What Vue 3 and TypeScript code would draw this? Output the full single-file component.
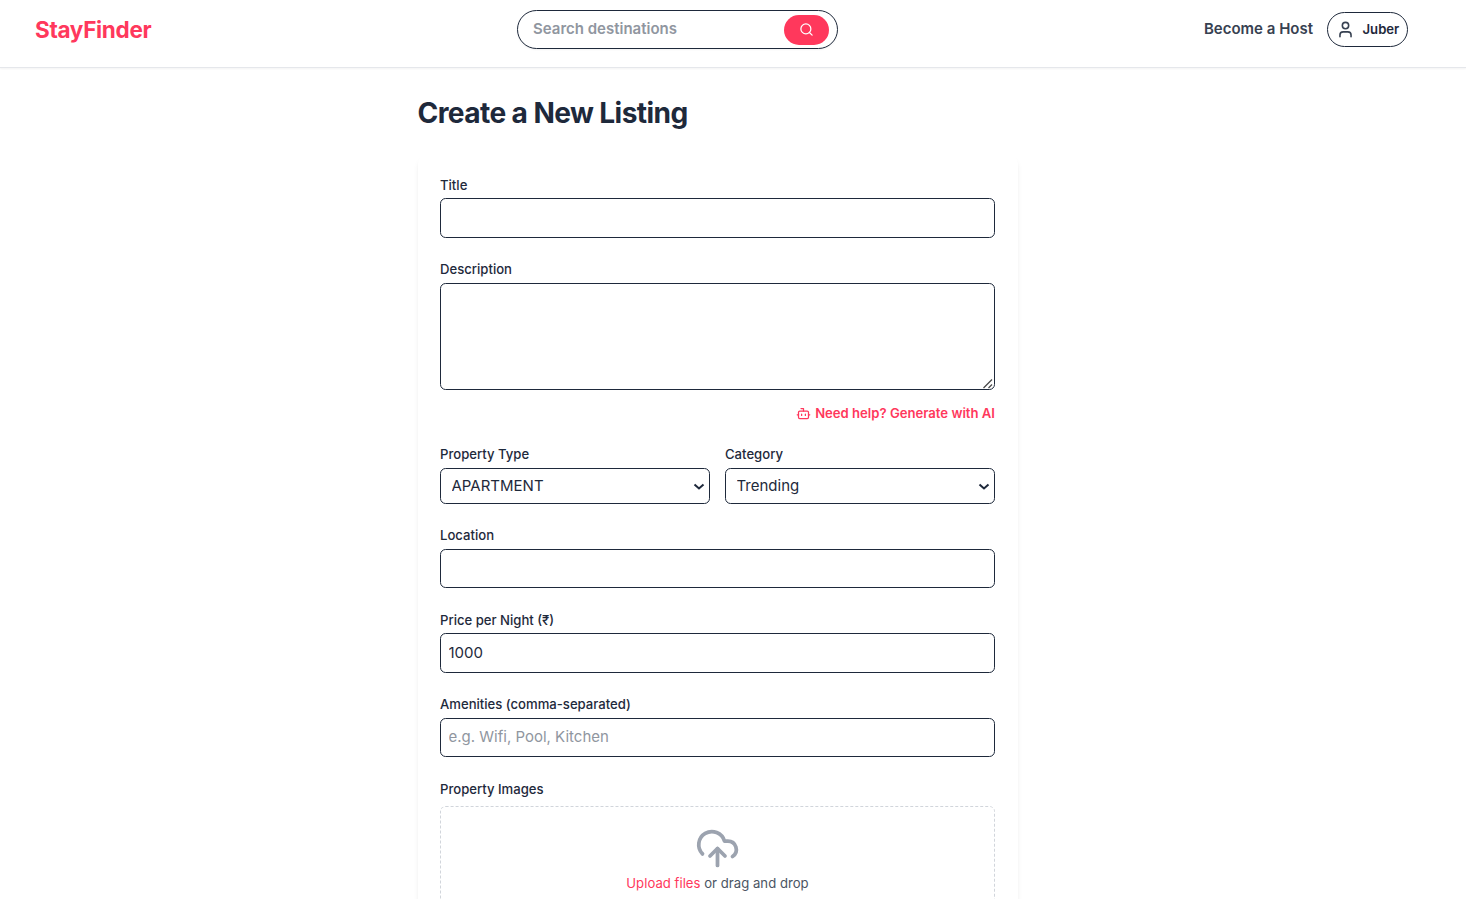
<script setup lang="ts">
import { ref } from 'vue'

const search = ref('')
const title = ref('')
const description = ref('')
const propertyType = ref('APARTMENT')
const category = ref('Trending')
const location = ref('')
const price = ref('1000')
const amenities = ref('')

const propertyTypes: string[] = ['APARTMENT', 'HOUSE', 'VILLA', 'CABIN']
const categories: string[] = ['Trending', 'Beach', 'Mountain', 'City']
</script>

<template>
  <div class="page">
    <header class="header">
      <a class="logo">StayFinder</a>
      <form class="search" @submit.prevent>
        <input v-model="search" class="search-input" type="text" placeholder="Search destinations" />
        <button class="search-button" type="submit" aria-label="Search">
          <svg width="15" height="15" viewBox="0 0 24 24" fill="none" stroke="currentColor" stroke-width="2" stroke-linecap="round" stroke-linejoin="round">
            <circle cx="11" cy="11" r="8" />
            <path d="m21 21-4.3-4.3" />
          </svg>
        </button>
      </form>
      <nav class="nav">
        <a class="host">Become a Host</a>
        <button class="user" type="button">
          <svg width="19" height="19" viewBox="0 0 24 24" fill="none" stroke="currentColor" stroke-width="2" stroke-linecap="round" stroke-linejoin="round">
            <path d="M19 21v-2a4 4 0 0 0-4-4H9a4 4 0 0 0-4 4v2" />
            <circle cx="12" cy="7" r="4" />
          </svg>
          <span>Juber</span>
        </button>
      </nav>
    </header>

    <main class="main">
      <h1 class="heading">Create a New Listing</h1>
      <form class="card" @submit.prevent>
        <div class="field title-field">
          <label for="title">Title</label>
          <input id="title" v-model="title" class="control tall" type="text" />
        </div>
        <div class="field description-field">
          <label for="description">Description</label>
          <div class="wrap">
            <textarea id="description" v-model="description" class="control area"></textarea>
            <svg class="grip" width="10" height="10" viewBox="0 0 10 10" fill="none" stroke="#4b4b4b" stroke-width="1.3">
              <path d="M0.5 9 9 0.5M5.5 9 9 5.5" />
            </svg>
          </div>
          <button class="ai" type="button">
            <svg width="15" height="15" viewBox="0 0 24 24" fill="none" stroke="currentColor" stroke-width="2" stroke-linecap="round" stroke-linejoin="round">
              <path d="M12 8V4H8" />
              <rect x="4" y="8" width="16" height="12" rx="2" />
              <path d="M2 14h2M20 14h2M15 13v2M9 13v2" />
            </svg>
            <span>Need help? Generate with AI</span>
          </button>
        </div>
        <div class="row">
          <div class="field">
            <label for="type">Property Type</label>
            <div class="wrap">
              <select id="type" v-model="propertyType" class="control select">
                <option v-for="item in propertyTypes" :key="item">{{ item }}</option>
              </select>
              <svg class="arrow" width="12" height="8" viewBox="0 0 12 8" fill="none" stroke="currentColor" stroke-width="2">
                <path d="m1.5 1.5 4.5 4 4.5-4" />
              </svg>
            </div>
          </div>
          <div class="field">
            <label for="category">Category</label>
            <div class="wrap">
              <select id="category" v-model="category" class="control select">
                <option v-for="item in categories" :key="item">{{ item }}</option>
              </select>
              <svg class="arrow" width="12" height="8" viewBox="0 0 12 8" fill="none" stroke="currentColor" stroke-width="2">
                <path d="m1.5 1.5 4.5 4 4.5-4" />
              </svg>
            </div>
          </div>
        </div>
        <div class="field location-field">
          <label for="location">Location</label>
          <input id="location" v-model="location" class="control" type="text" />
        </div>
        <div class="field price-field">
          <label for="price">Price per Night (₹)</label>
          <input id="price" v-model="price" class="control tall" type="text" />
        </div>
        <div class="field amenities-field">
          <label for="amenities">Amenities (comma-separated)</label>
          <input id="amenities" v-model="amenities" class="control" type="text" placeholder="e.g. Wifi, Pool, Kitchen" />
        </div>
        <div class="field">
          <label>Property Images</label>
          <div class="dropzone">
            <svg class="cloud" width="45" height="45" viewBox="0 0 24 24" fill="none" stroke="currentColor" stroke-width="2" stroke-linecap="round" stroke-linejoin="round">
              <path d="M4 14.899A7 7 0 1 1 15.71 8h1.79a4.5 4.5 0 0 1 2.5 8.242" />
              <path d="M12 12v9" />
              <path d="m16 16-4-4-4 4" />
            </svg>
            <p class="hint"><span class="upload">Upload files</span> or drag and drop</p>
          </div>
        </div>
      </form>
    </main>
  </div>
</template>

<style>
html,
body {
  background: #fff;
  overflow: hidden;
}
</style>

<style scoped>
.page,
.page * {
  box-sizing: border-box;
}
.page {
  height: 899px;
  overflow: hidden;
  font-family: Inter, "Liberation Sans", sans-serif;
  font-size: 15px;
  color: #1e293b;
}
button,
input,
select,
textarea {
  font: inherit;
  color: inherit;
  margin: 0;
}
button {
  padding: 0;
  border: 0;
  background: none;
}
.header {
  display: grid;
  grid-template-columns: 482px 321px 1fr;
  align-items: start;
  height: 68px;
  padding: 10px 58px 0 35px;
  background: #fff;
  border-bottom: 1px solid #e5e7eb;
  box-shadow: 0 1px 2px rgba(0, 0, 0, 0.05);
}
.logo {
  padding-top: 5px;
  font-size: 22.5px;
  line-height: 30px;
  font-weight: 700;
  letter-spacing: -0.3px;
  color: #ff385c;
}
.search {
  display: flex;
  align-items: center;
  height: 39px;
  padding: 0 8px 0 15px;
  border: 1px solid #1e293b;
  border-radius: 20px;
  background: #fff;
  box-shadow: 0 1px 2px rgba(0, 0, 0, 0.05);
}
.search-input {
  flex: 1;
  min-width: 0;
  padding: 0 0 2px;
  border: 0;
  outline: 0;
  background: transparent;
  font-weight: 600;
}
.search-input::placeholder,
.control::placeholder {
  color: #9096a0;
}
.search-button {
  display: flex;
  align-items: center;
  justify-content: center;
  width: 45px;
  height: 30px;
  margin-top: 1px;
  border-radius: 15px;
  background: #ff385c;
  color: #fff;
}
.search-button svg {
  margin-top: -1px;
}
.nav {
  display: flex;
  justify-content: flex-end;
  align-items: center;
  gap: 14px;
  padding-top: 2px;
}
.host {
  color: #374151;
  font-weight: 600;
  padding-bottom: 2px;
}
.user {
  display: flex;
  align-items: center;
  gap: 7.5px;
  width: 81px;
  height: 35px;
  padding-left: 8px;
  border: 1px solid #1e293b;
  border-radius: 18px;
  font-size: 13.125px;
  font-weight: 600;
}
.user span {
  padding-bottom: 1px;
}
.user svg {
  flex: none;
  color: #374151;
}
.main {
  width: 600px;
  margin-left: 417.5px;
  padding-top: 28px;
}
.heading {
  margin: 0;
  font-size: 28.125px;
  line-height: 34px;
  font-weight: 700;
  letter-spacing: -0.6px;
}
.card {
  margin-top: 26px;
  padding: 20px 22.5px;
  height: 1000px;
  background: #fff;
  border-radius: 8px;
  box-shadow: 0 4px 6px -1px rgba(0, 0, 0, 0.07), 0 2px 4px -2px rgba(0, 0, 0, 0.07);
}
.field {
  display: flex;
  flex-direction: column;
}
label {
  margin-bottom: 4px;
  font-size: 13.125px;
  line-height: 19px;
  font-weight: 500;
}
.control {
  display: block;
  width: 100%;
  height: 39px;
  padding: 0 7.5px 2px;
  border: 1px solid #1e293b;
  border-radius: 5.6px;
  outline: 0;
  background: #fff;
}
.tall {
  height: 40px;
}
.title-field {
  margin-bottom: 22px;
}
.title-field label {
  margin-bottom: 3px;
}
.wrap {
  position: relative;
}
.area {
  height: 107px;
  resize: none;
}
.grip {
  position: absolute;
  right: 2px;
  bottom: 1px;
}
.arrow {
  position: absolute;
  right: 5px;
  top: 15px;
  pointer-events: none;
}
.ai {
  display: flex;
  align-items: center;
  align-self: flex-end;
  gap: 4px;
  margin-top: 14px;
  font-size: 13.125px;
  line-height: 19px;
  font-weight: 600;
  color: #ff385c;
}
.row {
  display: grid;
  grid-template-columns: 1fr 1fr;
  gap: 15px;
  margin: 22px 0;
}
.select {
  height: 36px;
  padding: 0 24px 2px 10.5px;
  appearance: none;
}
.price-field {
  margin-top: 23px;
}
.price-field label {
  margin-bottom: 3px;
}
.amenities-field {
  margin-top: 22px;
  margin-bottom: 23px;
}
.dropzone {
  display: flex;
  flex-direction: column;
  align-items: center;
  height: 160px;
  margin-top: 3px;
  padding-top: 19px;
  border: 1px dashed #d1d5db;
  border-radius: 5.6px;
}
.cloud {
  color: #9ca3af;
}
.hint {
  margin: 3px 0 0;
  font-size: 13.125px;
  line-height: 19px;
  letter-spacing: 0.03px;
  color: #4b5563;
}
.upload {
  color: #ff385c;
}
</style>
